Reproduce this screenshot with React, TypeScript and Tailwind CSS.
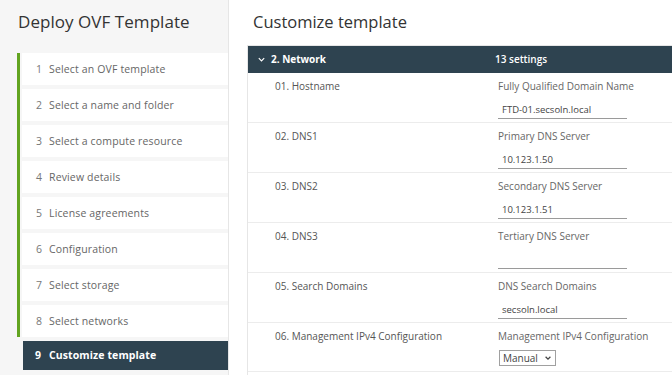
import React from "react";

const steps = [
  "Select an OVF template",
  "Select a name and folder",
  "Select a compute resource",
  "Review details",
  "License agreements",
  "Configuration",
  "Select storage",
  "Select networks",
];

const rows = [
  { label: "01. Hostname", desc: "Fully Qualified Domain Name", value: "FTD-01.secsoln.local" },
  { label: "02. DNS1", desc: "Primary DNS Server", value: "10.123.1.50" },
  { label: "03. DNS2", desc: "Secondary DNS Server", value: "10.123.1.51" },
  { label: "04. DNS3", desc: "Tertiary DNS Server", value: "" },
  { label: "05. Search Domains", desc: "DNS Search Domains", value: "secsoln.local" },
];

export default function App() {
  return (
    <div
      className="flex w-[672px] h-[375px] overflow-hidden bg-white text-[#565656]"
      style={{ fontFamily: "'Open Sans', 'Noto Sans', sans-serif" }}
    >
      {/* Sidebar */}
      <div className="w-[229px] shrink-0 bg-[#f6f6f6] border-r border-[#e6e6e6] flex flex-col">
        <div className="pl-[18px] pt-[9px] h-[53px] text-[17px] text-[#333] tracking-[0.05px]">
          Deploy OVF Template
        </div>
        <div className="flex flex-col">
          <div className="ml-[17px] border-l-[3px] border-[#62a420] flex flex-col gap-[4px] pl-[2px]">
            {steps.map((s, i) => (
              <div key={s} className="h-[32px] bg-white flex items-center text-[10.5px] text-[#666] tracking-[0.15px] pt-[1px]">
                <span className="w-[12px] ml-[14px] text-[#777]">{i + 1}</span>
                <span className="ml-[1px]">{s}</span>
              </div>
            ))}
          </div>
          <div className="ml-[23px] mt-[4px] h-[29px] bg-[#2e4350] flex items-center text-[10.5px] font-bold text-white tracking-[0.1px] pt-[1px]">
            <span className="w-[12px] ml-[12px]">9</span>
            <span className="ml-[2px]">Customize template</span>
          </div>
        </div>
      </div>

      {/* Main */}
      <div className="flex-1 flex flex-col">
        <div className="pl-[24px] pt-[10px] h-[45px] text-[16.5px] text-[#333]">Customize template</div>
        <div className="ml-[18px] flex-1 border-l border-[#e6e6e6] border-t border-t-[#e6e6e6] flex flex-col">
          <div className="h-[27px] bg-[#2e4350] flex items-center text-[10px] font-bold text-white">
            <svg width="9" height="9" viewBox="0 0 10 10" className="ml-[9px]">
              <path d="M2 3.5 L5 6.5 L8 3.5" fill="none" stroke="white" strokeWidth="1.3" />
            </svg>
            <span className="ml-[5px] w-[224px]">2. Network</span>
            <span className="font-semibold">13 settings</span>
          </div>
          {rows.map((r) => (
            <div key={r.label} className="h-[50px] border-b border-[#ececec] flex text-[10px]">
              <div className="w-[250px] pl-[27px] pt-[6px] text-[#555]">{r.label}</div>
              <div className="flex flex-col pt-[6px]">
                <div className="text-[#666]">{r.desc}</div>
                <div className="mt-[8px] w-[129px] h-[17px] border-b border-[#9a9a9a] pl-[4px] text-[9.5px] text-[#444] leading-[15px]">
                  {r.value}
                </div>
              </div>
            </div>
          ))}
          <div className="h-[49px] border-b border-[#ececec] flex text-[10px]">
            <div className="w-[250px] pl-[27px] pt-[6px] text-[#555]">06. Management IPv4 Configuration</div>
            <div className="flex flex-col pt-[6px]">
              <div className="text-[#666]">Management IPv4 Configuration</div>
              <div className="mt-[6px] ml-[1px] w-[57px] h-[16px] border border-[#a0a0a0] flex items-center justify-between px-[3px] text-[10px] text-[#444]">
                <span>Manual</span>
                <svg width="8" height="8" viewBox="0 0 10 10">
                  <path d="M2 3.5 L5 6.5 L8 3.5" fill="none" stroke="#444" strokeWidth="1.6" />
                </svg>
              </div>
            </div>
          </div>
        </div>
      </div>
    </div>
  );
}
